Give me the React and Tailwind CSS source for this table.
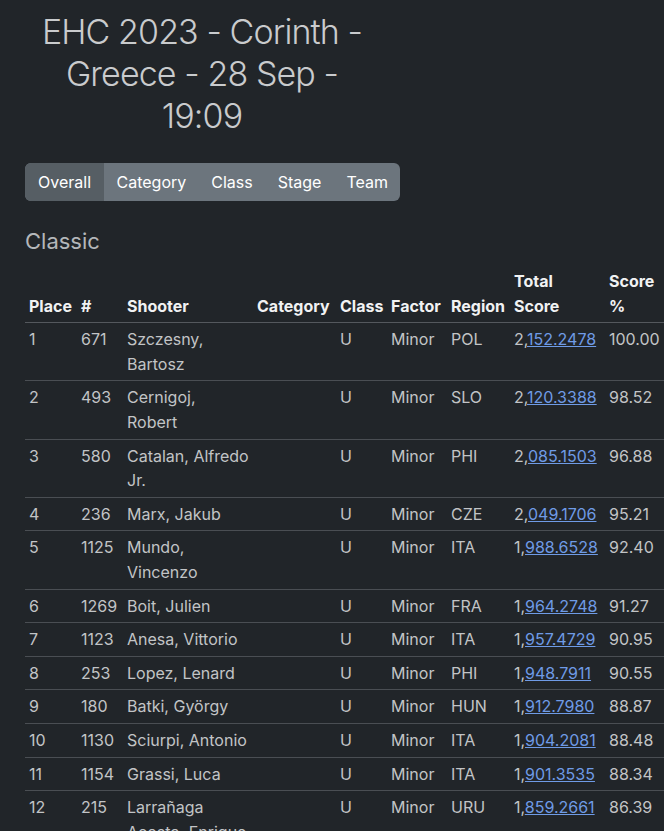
const rows = [
  ["1", "671", ["Szczesny,", "Bartosz"], "POL", "2,", "152.2478", "100.00"],
  ["2", "493", ["Cernigoj,", "Robert"], "SLO", "2,", "120.3388", "98.52"],
  ["3", "580", ["Catalan, Alfredo", "Jr."], "PHI", "2,", "085.1503", "96.88"],
  ["4", "236", ["Marx, Jakub"], "CZE", "2,", "049.1706", "95.21"],
  ["5", "1125", ["Mundo,", "Vincenzo"], "ITA", "1,", "988.6528", "92.40"],
  ["6", "1269", ["Boit, Julien"], "FRA", "1,", "964.2748", "91.27"],
  ["7", "1123", ["Anesa, Vittorio"], "ITA", "1,", "957.4729", "90.95"],
  ["8", "253", ["Lopez, Lenard"], "PHI", "1,", "948.7911", "90.55"],
  ["9", "180", ["Batki, György"], "HUN", "1,", "912.7980", "88.87"],
  ["10", "1130", ["Sciurpi, Antonio"], "ITA", "1,", "904.2081", "88.48"],
  ["11", "1154", ["Grassi, Luca"], "ITA", "1,", "901.3535", "88.34"],
  ["12", "215", ["Larrañaga", "Acosta, Enrique"], "URU", "1,", "859.2661", "86.39"],
];

const tabs = ["Overall", "Category", "Class", "Stage", "Team"];

export default function App() {
  return (
    <div className="min-h-screen w-[664px] overflow-hidden bg-[#212529] pl-[25px] font-['Inter',sans-serif] text-[#c2c4c6]">
      <h1 className="w-[354px] whitespace-nowrap pt-[11px] text-center text-[34px] font-light leading-[42px] tracking-[-0.9px] text-[#c9cbcd]">
        EHC 2023 - Corinth -<br />
        Greece - 28 Sep -<br />
        19:09
      </h1>

      <div className="mt-[26px] inline-flex overflow-hidden rounded-md bg-[#6c757d] text-[16px] text-white">
        {tabs.map((t, i) => (
          <div
            key={t}
            className={
              i === 0
                ? "bg-[#565e64] px-[13px] py-[7px] leading-6"
                : "px-[12.5px] py-[7px] leading-6"
            }
          >
            {t}
          </div>
        ))}
      </div>

      <h2 className="mt-[26px] text-[22px] leading-7 text-[#b4b7ba]">Classic</h2>

      <table className="mt-[10px] w-[660px] table-fixed border-collapse text-left text-[16px] leading-[24.6px]">
        <colgroup>
          <col className="w-[52px]" />
          <col className="w-[46px]" />
          <col className="w-[130px]" />
          <col className="w-[83px]" />
          <col className="w-[51px]" />
          <col className="w-[60px]" />
          <col className="w-[63px]" />
          <col className="w-[95px]" />
          <col className="w-[80px]" />
        </colgroup>
        <thead>
          <tr className="border-b border-[#54585d] align-bottom font-bold text-[#f1f2f3]">
            <th className="p-1">Place</th>
            <th className="p-1">#</th>
            <th className="p-1">Shooter</th>
            <th className="p-1">Category</th>
            <th className="p-1">Class</th>
            <th className="p-1">Factor</th>
            <th className="p-1">Region</th>
            <th className="p-1">Total<br />Score</th>
            <th className="p-1">Score<br />%</th>
          </tr>
        </thead>
        <tbody>
          {rows.map((r) => (
            <tr key={r[0]} className="border-b border-[#4a4e53] align-top">
              <td className="p-1">{r[0]}</td>
              <td className="p-1">{r[1]}</td>
              <td className="whitespace-nowrap p-1">
                {r[2].map((l, i) => (
                  <div key={i}>{l}</div>
                ))}
              </td>
              <td className="p-1"></td>
              <td className="p-1">U</td>
              <td className="p-1">Minor</td>
              <td className="p-1">{r[3]}</td>
              <td className="whitespace-nowrap p-1">
                {r[4]}
                <span className="text-[#6f9be6] underline">{r[5]}</span>
              </td>
              <td className="whitespace-nowrap p-1">{r[6]}</td>
            </tr>
          ))}
        </tbody>
      </table>
    </div>
  );
}
